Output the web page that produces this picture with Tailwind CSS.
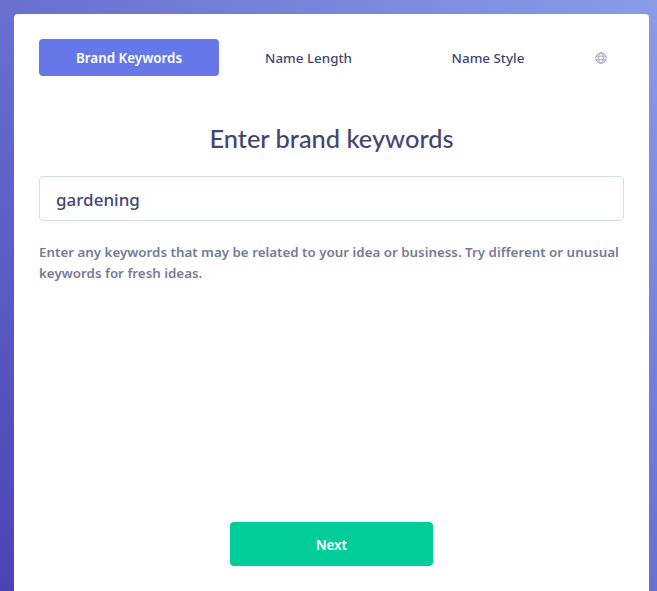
<!doctype html>
<html>
<head>
<meta charset="utf-8">
<script src="https://cdn.jsdelivr.net/npm/@tailwindcss/browser@4"></script>
</head>
<body class="m-0 h-[591px] w-[657px] overflow-hidden bg-linear-to-bl from-[#8a9ce9] to-[#4b42b6] font-['Noto_Sans',sans-serif]">
<div class="h-[591px] pr-[8px] pl-[14px] pt-[14px]">
<main class="flex h-[600px] flex-col rounded-t-[4px] bg-white px-[25px] pt-[25px]">
<nav class="flex h-[37px] items-center">
<button class="h-[37px] w-[180px] rounded-[4px] bg-[#6678e8] pt-[2px] text-[13.4px] font-semibold text-white">Brand Keywords</button>
<button class="h-[37px] w-[179px] pt-[2px] text-[13.4px] font-medium text-[#45456f]">Name Length</button>
<button class="h-[37px] w-[180px] pt-[2px] text-[13.4px] font-medium text-[#45456f]">Name Style</button>
<span class="flex flex-1 justify-center">
<svg width="12" height="12" viewBox="0 0 12 12" fill="none" stroke="#9a9fbd" stroke-width="0.9"><circle cx="6" cy="6" r="5.2"/><ellipse cx="6" cy="6" rx="2.3" ry="5.2"/><path d="M1 4.2h10M1 7.8h10"/></svg>
</span>
</nav>
<h1 class="mt-[44px] text-center font-['Lato',sans-serif] text-[25.4px] leading-[36px] font-medium text-[#45456f]">Enter brand keywords</h1>
<div class="mt-[20px] flex h-[45px] items-center rounded-[4px] border border-[#cfe0ea] px-4 pt-[2px] text-[17px] font-medium text-[#45456f]">gardening</div>
<p class="mt-[21px] text-[13.35px] leading-[21px] font-semibold text-[#747b96]">Enter any keywords that may be related to your idea or business. Try different or unusual keywords for fresh ideas.</p>
<div class="mt-[238px] flex justify-center">
<button class="h-[44px] w-[203px] rounded-[4px] bg-[#00cd98] pt-[2px] text-[13.4px] font-semibold text-white">Next</button>
</div>
</main>
</div>
</body>
</html>
